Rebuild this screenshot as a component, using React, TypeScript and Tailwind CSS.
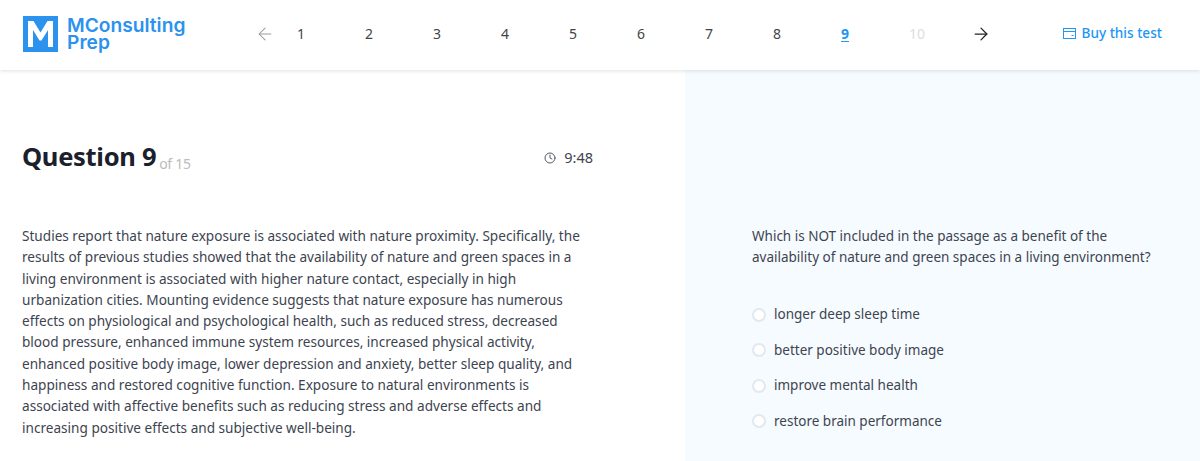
import React from 'react';
import { ArrowLeft, ArrowRight, Clock } from 'lucide-react';

const passage = [
    'Studies report that nature exposure is associated with nature proximity. Specifically, the',
    'results of previous studies showed that the availability of nature and green spaces in a',
    'living environment is associated with higher nature contact, especially in high',
    'urbanization cities. Mounting evidence suggests that nature exposure has numerous',
    'effects on physiological and psychological health, such as reduced stress, decreased',
    'blood pressure, enhanced immune system resources, increased physical activity,',
    'enhanced positive body image, lower depression and anxiety, better sleep quality, and',
    'happiness and restored cognitive function. Exposure to natural environments is',
    'associated with affective benefits such as reducing stress and adverse effects and',
    'increasing positive effects and subjective well-being.',
];

const answers = [
    'longer deep sleep time',
    'better positive body image',
    'improve mental health',
    'restore brain performance',
];

const pages = ['1', '2', '3', '4', '5', '6', '7', '8', '9', '10'];

const pageClass = (page: string): string => {
    if (page === '9') {
        return 'font-bold text-[#2196f3] underline underline-offset-2';
    }
    if (page === '10') {
        return 'text-[#dddddd]';
    }
    return 'text-[#444444]';
};

const Logo = (): JSX.Element => (
    <div className="ml-px flex items-center gap-[9px]">
        <svg width="35" height="36" viewBox="0 0 35 36" className="shrink-0">
            <rect width="35" height="36" fill="#2b92ee" />
            <path d="M5 31V5h5.500L17.500 16.500 24.500 5H30v26h-5V14L18.500 24.500h-2L10 14v17z" fill="#ffffff" />
        </svg>
        <div className="font-['Inter',sans-serif] text-[19.200px] leading-[17px] font-semibold text-[#2b92ee]">
            <div>MConsulting</div>
            <div>Prep</div>
        </div>
    </div>
);

export default function App(): JSX.Element {
    return (
        <div className="h-[461px] w-[1200px] overflow-hidden bg-white font-['Noto_Sans',sans-serif] text-[#3d4450]">
            <header className="relative z-10 flex h-[70px] items-center bg-white pb-[3px] pl-[22px] pr-[38px] shadow-[0_1px_4px_rgba(0,0,0,0.12)]">
                <div className="w-[233px]">
                    <Logo />
                </div>
                <ArrowLeft size={20} strokeWidth={1.25} className="text-[#999999]" />
                <nav className="ml-[22px] flex">
                    {pages.map((page) => (
                        <span key={page} className={`w-[68px] text-[14px] ${pageClass(page)}`}>
                            {page}
                        </span>
                    ))}
                </nav>
                <ArrowRight size={20} strokeWidth={1.5} className="-ml-[6px] text-[#222222]" />
                <div className="ml-auto flex items-center gap-[6px] text-[13.600px] font-medium text-[#2196f3]">
                    <svg width="13" height="11" viewBox="0 0 13 11" fill="none" stroke="currentColor">
                        <rect x="0.500" y="0.500" width="12" height="10" />
                        <path d="M0.500 3.500h12M8.500 7.500h2" />
                    </svg>
                    Buy this test
                </div>
            </header>
            <main className="flex h-[391px]">
                <section className="w-[685px] shrink-0 pl-[22px] pr-[92px] shadow-[1px_0_4px_rgba(0,0,0,0.08)]">
                    <div className="mt-[67px] flex h-[38px] items-center justify-between">
                        <h1 className="mt-[8px] text-[25.500px] leading-[38px] font-bold tracking-[-0.3px] text-[#1a202c]">
                            Question 9
                            <span className="ml-[3px] align-[-3px] text-[14px] font-normal tracking-[-0.3px] text-[#bbbbbb]">of 15</span>
                        </h1>
                        <div className="mt-[3px] flex items-center gap-[8px] text-[14.500px]">
                            <Clock size={12} strokeWidth={1.75} />
                            9:48
                        </div>
                    </div>
                    <p className="mt-[50px] whitespace-nowrap text-[13.600px] leading-[21.300px]">
                        {passage.map((line) => (
                            <span key={line} className="block">
                                {line}
                            </span>
                        ))}
                    </p>
                </section>
                <section className="flex-1 bg-[#f6fbff] pl-[67px] pt-[156px] text-[13.500px] leading-[21px]">
                    <p>
                        Which is NOT included in the passage as a benefit of the
                        <br />
                        availability of nature and green spaces in a living environment?
                    </p>
                    <ul className="mt-[36px] flex flex-col gap-[14.500px]">
                        {answers.map((answer) => (
                            <li key={answer} className="flex items-center gap-[8px]">
                                <span className="h-[14px] w-[14px] rounded-full border-2 border-[#e2e8f0] bg-white" />
                                {answer}
                            </li>
                        ))}
                    </ul>
                </section>
            </main>
        </div>
    );
}
